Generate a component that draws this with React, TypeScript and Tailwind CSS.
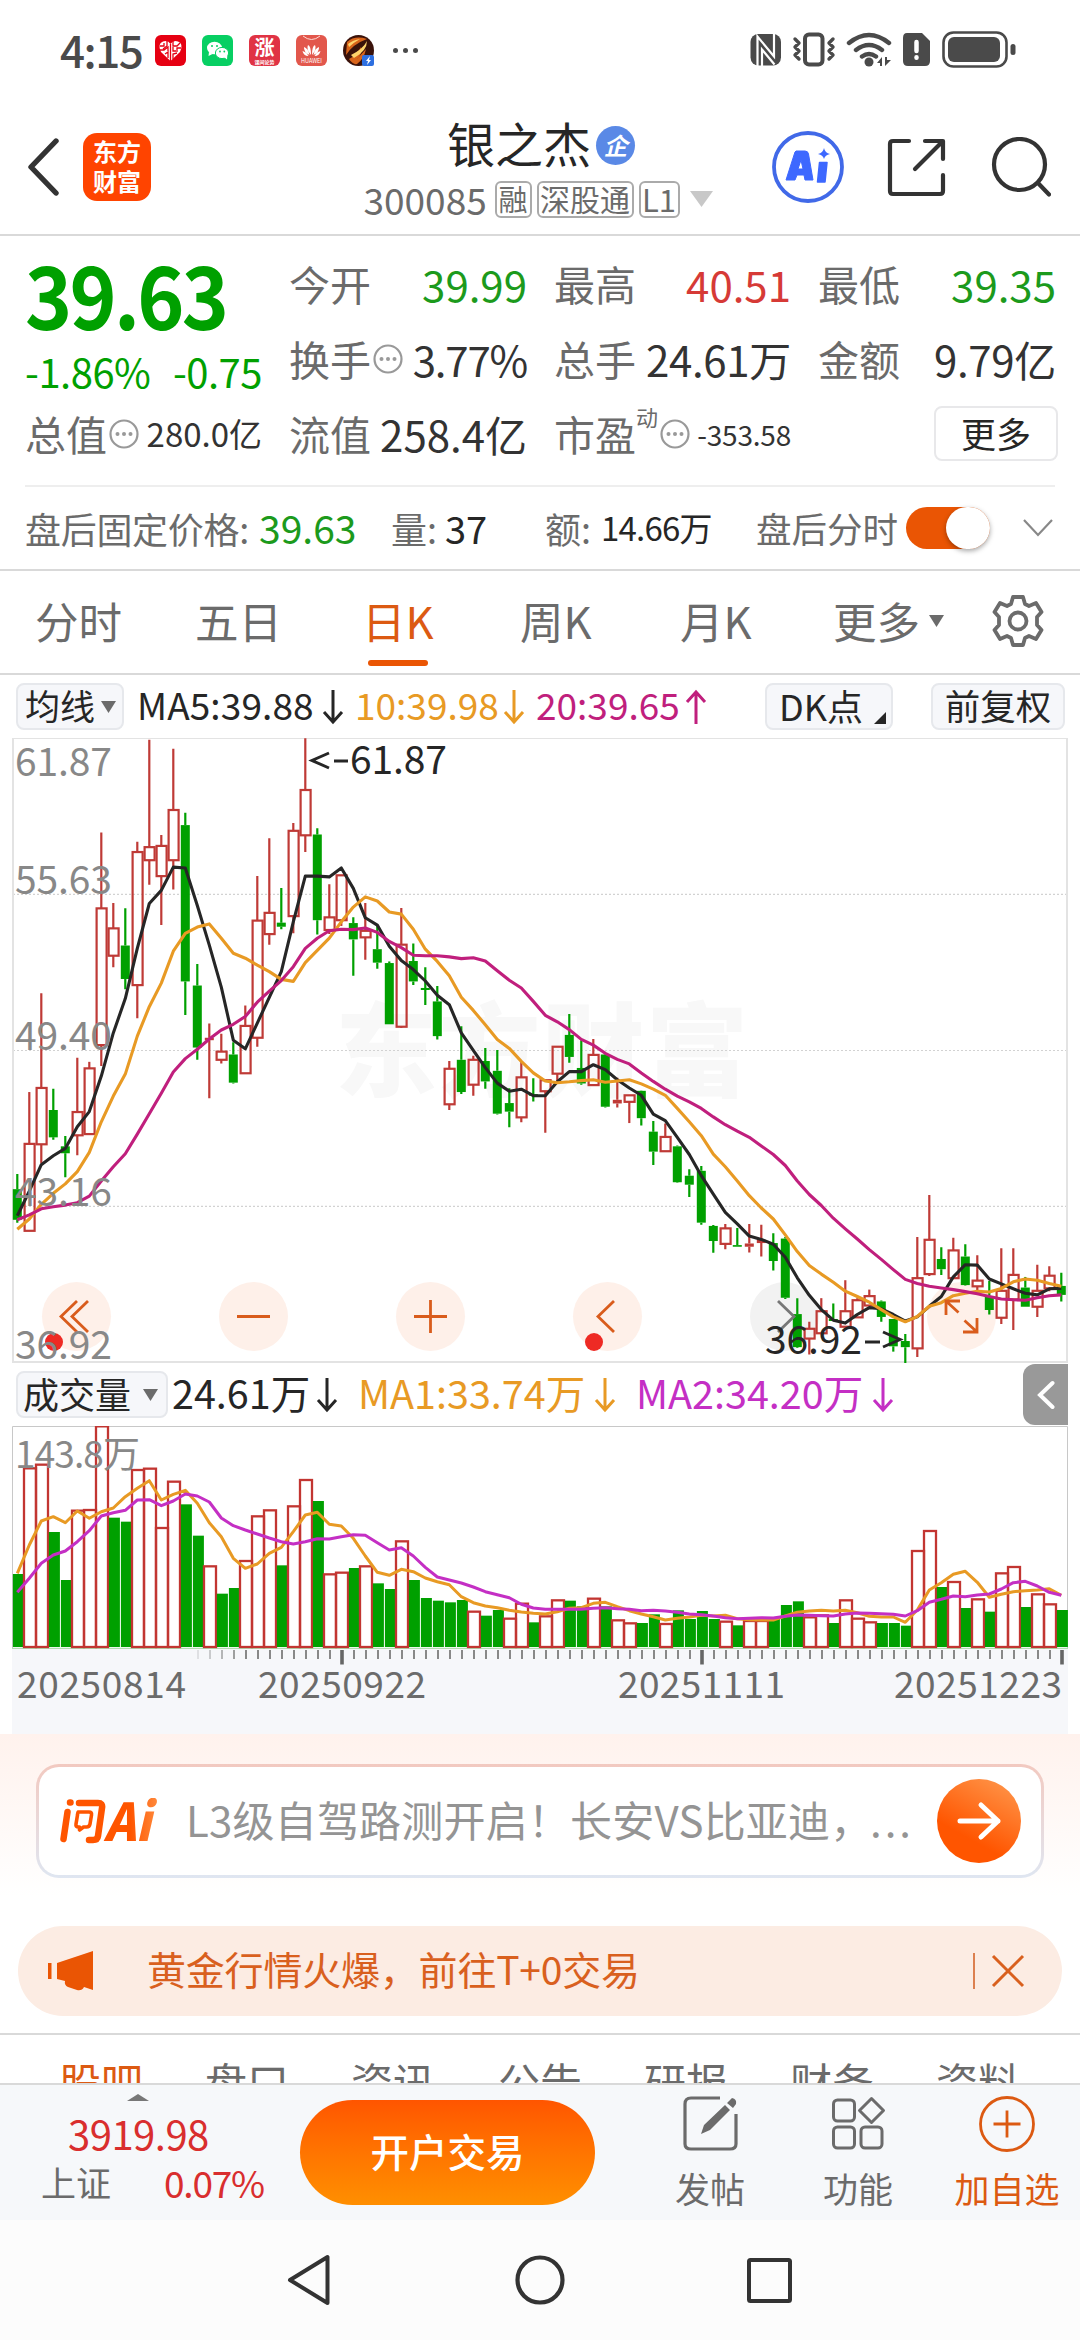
import React from "react";

const GREEN = "#00a000";
const RED = "#c23531";

type Candle = [kind: "r" | "g", high: number, top: number, bottom: number, low: number];

/* Heights are measured in plot units: 2.45 units per pixel, counted down from y = 730. */
const candles: Candle[] = [
  ["g", 1088, 1125, 1200, 1207], ["r", 887, 1014, 1227, 1227], ["r", 645, 877, 1015, 1062], ["g", 879, 931, 998, 1004],
  ["g", 995, 1020, 1037, 1096], ["r", 803, 936, 993, 1042], ["r", 813, 829, 990, 990], ["r", 251, 437, 772, 823],
  ["r", 424, 486, 553, 581], ["g", 437, 528, 610, 635], ["r", 274, 299, 625, 706], ["r", 24, 287, 319, 379],
  ["r", 257, 284, 358, 478], ["r", 46, 196, 319, 391], ["g", 203, 233, 616, 698], ["g", 573, 626, 778, 808],
  ["r", 719, 754, 760, 902], ["r", 744, 788, 808, 817], ["g", 765, 795, 864, 866], ["r", 675, 725, 841, 841],
  ["r", 358, 467, 754, 776], ["r", 265, 448, 500, 526], ["g", 387, 472, 482, 488], ["r", 228, 247, 456, 498],
  ["r", 20, 147, 258, 299], ["g", 241, 256, 466, 501], ["r", 378, 459, 490, 500], ["r", 356, 356, 466, 480],
  ["g", 459, 473, 513, 602], ["r", 424, 492, 508, 563], ["g", 480, 537, 570, 585], ["g", 567, 571, 721, 721],
  ["r", 436, 526, 727, 730], ["g", 523, 566, 616, 625], ["g", 581, 632, 637, 674], ["g", 627, 665, 750, 758],
  ["r", 811, 830, 917, 931], ["g", 726, 808, 887, 892], ["r", 798, 808, 869, 896], ["g", 779, 811, 861, 879],
  ["g", 784, 835, 940, 942], ["g", 878, 914, 935, 973], ["r", 813, 851, 949, 961], ["g", 853, 892, 896, 910],
  ["r", 856, 858, 885, 987], ["r", 774, 776, 842, 860], ["g", 696, 747, 801, 815], ["g", 760, 828, 866, 869],
  ["r", 757, 796, 870, 870], ["g", 793, 795, 923, 925], ["r", 852, 906, 915, 925], ["r", 895, 895, 911, 963],
  ["g", 883, 884, 951, 969], ["g", 958, 984, 1033, 1066], ["r", 964, 997, 1032, 1034], ["g", 1018, 1020, 1108, 1109],
  ["g", 1076, 1092, 1114, 1144], ["g", 1068, 1080, 1207, 1212], ["g", 1213, 1215, 1252, 1281], ["r", 1210, 1221, 1259, 1272],
  ["g", 1220, 1262, 1266, 1266], ["r", 1210, 1258, 1266, 1280], ["r", 1212, 1249, 1257, 1290], ["g", 1233, 1257, 1301, 1324],
  ["g", 1242, 1246, 1391, 1394], ["g", 1392, 1431, 1512, 1514], ["r", 1450, 1467, 1491, 1530], ["r", 1392, 1424, 1478, 1478],
  ["g", 1405, 1443, 1448, 1448], ["r", 1348, 1424, 1462, 1462], ["r", 1392, 1397, 1439, 1439], ["r", 1371, 1387, 1410, 1410],
  ["g", 1398, 1400, 1438, 1450], ["g", 1443, 1443, 1510, 1523], ["g", 1480, 1497, 1512, 1551], ["r", 1242, 1343, 1515, 1536],
  ["r", 1139, 1249, 1333, 1338], ["g", 1267, 1296, 1321, 1335], ["r", 1244, 1275, 1343, 1343], ["g", 1260, 1290, 1360, 1361],
  ["r", 1287, 1349, 1363, 1375], ["g", 1350, 1388, 1421, 1432], ["r", 1270, 1374, 1440, 1455], ["r", 1270, 1335, 1395, 1470],
  ["g", 1340, 1366, 1413, 1413], ["r", 1310, 1374, 1413, 1438], ["r", 1314, 1337, 1368, 1375], ["g", 1330, 1362, 1384, 1400],
];

const ma5 = [1190, 1130, 1065, 1043, 1025, 972, 935, 848, 742, 658, 535, 425, 393, 336, 338, 430, 527, 630, 760, 781, 718, 655, 592, 470, 358, 358, 360, 338, 388, 460, 478, 530, 565, 587, 615, 650, 673, 742, 785, 827, 865, 885, 880, 896, 896, 862, 837, 837, 820, 832, 857, 877, 895, 941, 957, 998, 1040, 1092, 1137, 1182, 1210, 1240, 1248, 1260, 1292, 1342, 1385, 1420, 1446, 1453, 1432, 1415, 1418, 1432, 1448, 1438, 1412, 1388, 1340, 1310, 1311, 1345, 1357, 1369, 1380, 1384, 1369, 1368];
const ma10 = [1223, 1198, 1162, 1135, 1112, 1082, 1035, 960, 897, 843, 750, 678, 620, 542, 498, 483, 475, 510, 547, 559, 576, 592, 611, 616, 570, 540, 510, 470, 434, 409, 419, 446, 451, 488, 537, 567, 602, 655, 687, 722, 758, 780, 812, 840, 860, 864, 862, 859, 857, 863, 860, 857, 867, 880, 895, 927, 960, 994, 1039, 1070, 1105, 1141, 1171, 1198, 1237, 1278, 1312, 1333, 1353, 1375, 1388, 1402, 1420, 1438, 1450, 1437, 1412, 1403, 1386, 1380, 1375, 1377, 1368, 1352, 1345, 1348, 1356, 1363];
const ma20 = [1200, 1188, 1173, 1168, 1164, 1158, 1142, 1105, 1070, 1038, 990, 940, 890, 838, 805, 782, 757, 735, 721, 702, 667, 640, 614, 580, 535, 510, 492, 488, 489, 485, 496, 518, 533, 552, 553, 553, 556, 560, 558, 566, 590, 613, 632, 665, 699, 715, 734, 758, 772, 792, 807, 818, 840, 861, 880, 897, 911, 927, 948, 967, 983, 998, 1019, 1040, 1067, 1105, 1138, 1165, 1196, 1222, 1247, 1273, 1297, 1322, 1346, 1356, 1363, 1367, 1371, 1376, 1381, 1388, 1394, 1396, 1397, 1391, 1386, 1384];

/* Volume tops: 3 units per pixel, counted down from y = 1360; negative marks a rising day. */
const volumes = [642, -322, -311, 516, 660, -449, -447, -196, 473, 485, -327, -323, -501, -362, 433, 527, -616, 701, 684, -600, -466, -448, 616, -436, -357, 423, -640, -635, 624, -616, 670, 687, -541, 660, 714, 722, 727, 720, -752, 767, 750, -773, -728, 787, -766, -718, 722, 739, -713, 739, -778, -787, 789, 763, -789, 751, 777, 753, 777, -782, 796, -780, -780, 775, 735, 724, -769, -763, 789, -718, -773, -784, 789, 789, 797, -570, -510, 681, -663, 744, -715, 755, -637, -618, 741, -700, -730, 750];
const vma1 = [640, 555, 483, 470, 488, 453, 475, 455, 444, 410, 385, 362, 420, 403, 391, 430, 488, 530, 595, 625, 612, 580, 562, 515, 465, 457, 493, 498, 535, 588, 637, 646, 628, 635, 654, 665, 674, 710, 728, 738, 743, 751, 756, 760, 762, 755, 745, 743, 730, 727, 740, 752, 762, 770, 780, 775, 771, 766, 768, 766, 776, 779, 780, 780, 768, 757, 753, 751, 753, 751, 758, 769, 771, 771, 787, 750, 690, 668, 643, 634, 667, 712, 703, 695, 692, 690, 686, 706];
const vma2 = [697, 655, 610, 585, 573, 545, 512, 468, 458, 451, 420, 419, 437, 423, 402, 408, 426, 474, 497, 510, 522, 534, 545, 552, 545, 536, 537, 530, 524, 526, 548, 570, 563, 588, 622, 651, 660, 669, 681, 695, 704, 713, 733, 744, 748, 748, 748, 748, 745, 743, 746, 748, 752, 751, 753, 757, 762, 764, 768, 773, 776, 775, 773, 774, 769, 765, 766, 767, 768, 762, 759, 760, 761, 763, 768, 752, 727, 718, 708, 710, 705, 702, 687, 668, 664, 678, 697, 706];

const cx = (i: number) => 17.3 + 12 * i;
const py = (v: number) => 730 + v / 2.45;
const vy = (v: number) => 1360 + v / 3;
const line = (vals: number[], f: (v: number) => number) =>
  vals.map((v, i) => `${cx(i).toFixed(1)},${f(v).toFixed(1)}`).join(" ");

function StatusBar() {
  return (
    <div className="flex h-[100px] items-center pl-[60px] pr-[64px] text-[#4a4a4a]">
      <span className="w-[95px] whitespace-nowrap pb-[2px] text-[44px] font-medium leading-[56px] tracking-[-1.500px]">4:15</span>
      <div className="flex gap-4">
        <svg width="31" height="31" viewBox="0 0 31 31">
          <rect width="31" height="31" rx="6" fill="#e60012" />
          <path d="M15.500 26L6 17Q2 9 8 6.500Q13 5 15.500 9Q18 5 23 6.500Q29 9 25 17Z" fill="#fff" />
          <path d="M5 11h4v-3M12 6v5l-4 3M5 15h4l4-3v4M18 6v5h4l3-3M26 13h-4v4M18 12v4h3M10 19l3-2v6M15.500 9v17M18 24v-5l4-1" stroke="#e60012" strokeWidth="1.300" fill="none" />
        </svg>
        <svg width="31" height="31" viewBox="0 0 31 31">
          <rect width="31" height="31" rx="6" fill="#07cf63" />
          <ellipse cx="12.500" cy="13" rx="7.500" ry="6.300" fill="#fff" />
          <path d="M7 17l-.5 4 4-2z" fill="#fff" />
          <ellipse cx="20" cy="18" rx="6.600" ry="5.600" fill="#fff" stroke="#07cf63" />
          <path d="M22 22l3 2.500.3-4z" fill="#fff" />
          <g fill="#07cf63"><circle cx="10" cy="11" r="1" /><circle cx="15" cy="11" r="1" /><circle cx="18" cy="16.500" r=".9" /><circle cx="22.300" cy="16.500" r=".9" /></g>
        </svg>
        <div className="flex h-[31px] w-[31px] flex-col items-center rounded-md bg-[#e03344] text-white">
          <span className="text-[20px] font-bold leading-[23px]">涨</span>
          <span className="text-[5px] font-bold leading-[7px]">课间论势</span>
        </div>
        <svg width="31" height="31" viewBox="0 0 31 31">
          <rect width="31" height="31" rx="6" fill="#e2574c" />
          <path d="M7 1q8.500 7 17 0" fill="none" stroke="#ffd9d3" strokeWidth="1" />
          <path d="M15 20q-5-6-3-10 3 1 3 10zM16 20q5-6 3-10-3 1-3 10zM13.500 20q-6-3-5.500-8 4 1 5.500 8zM17.500 20q6-3 5.500-8-4 1-5.500 8zM12.500 21q-5 0-6-5 4 1 6 5zM18.500 21q5 0 6-5-4 1-6 5z" fill="#fff" />
          <text x="15.500" y="28" fontSize="5.500" fill="#fff" textAnchor="middle">HUAWEI</text>
        </svg>
        <svg width="31" height="31" viewBox="0 0 31 31">
          <circle cx="15.500" cy="15.500" r="15.500" fill="#3a120a" />
          <path d="M4 7q8-7 20-3Q10 9 3 20zM6 24Q14 20 18 12q2 6-4 12l9-10q-2 10-9 15-4 1-8-5z" fill="#d8641a" />
          <path d="M8 20Q20 14 24 6q0 10-13 17zM5 9q5-4 12-5-7 4-11 8z" fill="#ffd36b" />
          <rect x="19" y="20" width="12" height="11" rx="2" fill="#2d6fe0" />
          <path d="M27 21l-4 5h2l-1 4 4-5h-2z" fill="#fff" />
        </svg>
      </div>
      <div className="ml-[19px] flex gap-[5px]">
        <i className="h-[5px] w-[5px] rounded-full bg-[#4a4a4a]" />
        <i className="h-[5px] w-[5px] rounded-full bg-[#4a4a4a]" />
        <i className="h-[5px] w-[5px] rounded-full bg-[#4a4a4a]" />
      </div>
      <svg className="ml-auto" width="266" height="38" viewBox="750 32 266 38" fill="#4a4a4a">
        <rect x="750.500" y="35" width="30.500" height="31.500" rx="8" />
        <path d="M757.500 67V37.500L774 57.500V34.500" fill="none" stroke="#fff" strokeWidth="2.200" />
        <path d="M762 67V50.500L774.500 65.500" fill="none" stroke="#fff" strokeWidth="2.200" />
        <rect x="805" y="35.500" width="17.500" height="30" rx="4" fill="none" stroke="#4a4a4a" strokeWidth="4" />
        <path d="M795 40l4 4-4 4 4 4-4 4 4 4M833 40l-4 4 4 4-4 4 4 4-4 4" fill="none" stroke="#4a4a4a" strokeWidth="3.400" strokeLinecap="round" strokeLinejoin="round" />
        <g fill="none" stroke="#4a4a4a" strokeWidth="4.400" strokeLinecap="round">
          <path d="M849 44q20-16 40 0M856 51q13-10 26 0M862 57.500q7-5 14 0" />
        </g>
        <circle cx="869" cy="63" r="4.500" />
        <path d="M882 58v9h-2v-3h-3zM885 67v-9h2v3h4z" />
        <path d="M907 34h15l8 8v20q0 5-5 5h-17q-5 0-5-5V39q0-5 4-5z" />
        <path d="M916.500 43v9M916.500 58.200v.6" stroke="#fff" strokeWidth="4.500" strokeLinecap="round" />
        <rect x="943.500" y="33.500" width="63" height="34" rx="10" fill="none" stroke="#4a4a4a" strokeWidth="2.600" />
        <rect x="948" y="38" width="52" height="25" rx="6" />
        <rect x="1010.500" y="45" width="5" height="11" rx="2.500" />
      </svg>
    </div>
  );
}

function Header() {
  return (
    <div className="flex h-[136px] items-center border-b-2 border-[#d9d9d9]">
      <svg className="ml-[26px]" width="34" height="58" viewBox="0 0 34 58"><path d="M30 3L5 29l25 26" fill="none" stroke="#333" strokeWidth="5.400" strokeLinecap="round" strokeLinejoin="round" /></svg>
      <div className="ml-[23px] flex h-[68px] w-[68px] flex-col items-center justify-center rounded-[14px] bg-[#ff4400] pb-[2px] font-bold text-white">
        <span className="text-[24px] leading-[30px]">东方</span>
        <span className="text-[24px] leading-[30px]">财富</span>
      </div>
      <div className="flex w-[621px] flex-col items-center pb-[1px]">
        <div className="ml-[169px] flex w-[350px] items-center justify-center pr-[10px]">
          <span className="pb-[7px] text-[48px] leading-[56px] text-[#262626]">银之杰</span>
          <span className="ml-[5px] flex h-[39px] w-[39px] items-center justify-center rounded-full bg-[#5a89e6] pb-[2px] text-[24px] font-bold italic leading-none text-white">企</span>
        </div>
        <div className="ml-[156px] mt-[2px] flex h-[40px] w-[352px] items-center text-[#6b6b6b]">
          <span className="w-[131px] text-[37px] leading-none">300085</span>
          <span className="flex h-[37px] w-[37px] items-center justify-center rounded-md border-2 border-[#aaa] pb-[2px] text-[29px] leading-none">融</span>
          <span className="ml-[5px] flex h-[37px] w-[97px] items-center justify-center rounded-md border-2 border-[#aaa] pb-[2px] text-[30px] leading-none">深股通</span>
          <span className="ml-[5px] flex h-[37px] w-[41px] items-center justify-center rounded-md border-2 border-[#aaa] pb-[2px] text-[31px] leading-none">L1</span>
          <svg className="ml-[10px]" width="23" height="16" viewBox="0 0 23 16"><path d="M0 0h23L11.500 16z" fill="#c8c8c8" /></svg>
        </div>
      </div>
      <svg width="72" height="72" viewBox="772 132 72 72">
        <circle cx="808" cy="168" r="34" fill="none" stroke="#4169e8" strokeWidth="3.800" />
        <path d="M796 152h9q3 0 3.500 3l4.500 26h-8l-1-5h-7l-2 5h-9l8-25q1-4 2-4zM801 161l-3 9h5z" fill="#3d68ff" fillRule="evenodd" stroke="#3d68ff" strokeWidth="1" strokeLinejoin="round" />
        <path d="M819.500 163.500h7.500l-2 19.500h-7.500z" fill="#3d68ff" stroke="#3d68ff" strokeWidth="1.500" strokeLinejoin="round" />
        <path d="M824 149q1 5 6 6-5 1-6 5-1-4-6-5 5-1 6-6z" fill="#3d68ff" />
      </svg>
      <svg className="ml-[42px]" width="60" height="60" viewBox="886 138 60 60" fill="none" stroke="#333" strokeWidth="4.200" strokeLinecap="round" strokeLinejoin="round">
        <path d="M909 142h-16q-3 0-3 3v47q0 3 3 3h47q3 0 3-3v-16M925 142h18v18M942 143l-27 27" />
      </svg>
      <svg className="ml-[45px]" width="60" height="60" viewBox="990 138 60 60" fill="none" stroke="#333" strokeWidth="4.200" strokeLinecap="round">
        <circle cx="1018.500" cy="165.500" r="25.500" /><path d="M1037 184l11 11.500" />
      </svg>
    </div>
  );
}

function Info() {
  return (
    <svg width="30" height="30" viewBox="0 0 30 30" className="shrink-0">
      <circle cx="15" cy="15" r="13.500" fill="none" stroke="#999" strokeWidth="2.200" />
      <g fill="#999"><circle cx="8.500" cy="15" r="2" /><circle cx="15" cy="15" r="2" /><circle cx="21.500" cy="15" r="2" /></g>
    </svg>
  );
}

function Stat({ label, value, className }: { label: string; value: string; className: string }) {
  return (
    <div className="flex items-center justify-between whitespace-nowrap">
      <span className="text-[41px] text-[#6b6b6b]">{label}</span>
      <span className={className}>{value}</span>
    </div>
  );
}

function Quote() {
  return (
    <div className="h-[335px] border-b-2 border-[#d9d9d9] px-[25px] pt-[10px] leading-none">
      <div className="grid grid-cols-[237px_238px_237px_238px] grid-rows-[75px_75px_75px] gap-x-[27px]">
        <div className="row-span-2 flex flex-col text-[#00a000]">
          <span className="mt-[2px] origin-left scale-x-92 text-[87px] font-bold leading-[88px] tracking-[-3px]">39.63</span>
          <div className="mt-[13px] flex justify-between text-[40px] leading-[44px] tracking-[-0.500px]"><span>-1.86%</span><span>-0.75</span></div>
        </div>
        <Stat label="今开" value="39.99" className="text-[42px] text-[#1c9a1c]" />
        <Stat label="最高" value="40.51" className="text-[42px] text-[#d63a36]" />
        <Stat label="最低" value="39.35" className="text-[42px] text-[#1c9a1c]" />
        <div className="flex items-center justify-between whitespace-nowrap">
          <span className="flex items-center gap-[2px] text-[41px] text-[#6b6b6b]">换手<Info /></span>
          <span className="text-[42px] tracking-[-1.200px] text-[#333]">3.77%</span>
        </div>
        <Stat label="总手" value="24.61万" className="text-[42px] tracking-[-0.300px] text-[#333]" />
        <Stat label="金额" value="9.79亿" className="text-[42px] tracking-[-0.300px] text-[#333]" />
        <div className="flex items-center justify-between whitespace-nowrap">
          <span className="flex items-center gap-[2px] text-[41px] text-[#6b6b6b]">总值<Info /></span>
          <span className="text-[33px] text-[#333]">280.0亿</span>
        </div>
        <Stat label="流值" value="258.4亿" className="text-[42px] text-[#333]" />
        <div className="flex items-center justify-between whitespace-nowrap">
          <span className="flex items-center text-[41px] text-[#6b6b6b]">市盈<span className="mb-[36px] text-[22px]">动</span><span className="ml-[2px]"><Info /></span></span>
          <span className="text-[28px] tracking-[-0.200px] text-[#333]">-353.58</span>
        </div>
        <div className="flex items-center justify-end">
          <span className="mr-[-2px] flex h-[55px] w-[124px] items-center justify-center rounded-lg border-2 border-[#e8e8ea] pb-[3px] text-[35px] text-[#262626]">更多</span>
        </div>
      </div>
      <div className="mt-[14px] h-[2px] bg-[#eee]" />
      <div className="flex h-[84px] items-center whitespace-nowrap pb-[3px] text-[36px] text-[#6b6b6b]">
        <span className="w-[234px] tracking-[-0.300px]">盘后固定价格:</span>
        <span className="w-[132px] text-[39px] text-[#1c9a1c]">39.63</span>
        <span className="w-[54px] text-[36px]">量:</span>
        <span className="w-[100px] text-[38px] text-[#262626]">37</span>
        <span className="w-[56px] text-[36px]">额:</span>
        <span className="w-[155px] text-[33px] tracking-[-0.800px] text-[#262626]">14.66万</span>
        <span className="w-[150px] text-[35.500px]">盘后分时</span>
        <span className="flex h-[42px] w-[84px] items-center justify-end rounded-full bg-[#ea5504]">
          <i className="h-[42px] w-[44px] rounded-full bg-white shadow-[0_2px_5px_rgba(0,0,0,0.35)]" />
        </span>
        <svg className="ml-[33px]" width="30" height="18" viewBox="0 0 30 18"><path d="M1 1l14 15L29 1" fill="none" stroke="#888" strokeWidth="2.200" /></svg>
      </div>
    </div>
  );
}

function Tabs() {
  return (
    <div className="flex h-[104px] items-center whitespace-nowrap border-b-2 border-[#d9d9d9] pb-[2px] pl-[35px] text-[43.500px] leading-none text-[#6b6b6b]">
      <span className="w-[160px]">分时</span>
      <span className="w-[167px]">五日</span>
      <span className="relative w-[158px] text-[#dc5a12]">日K<i className="absolute left-[6px] top-[61px] h-[6px] w-[60px] rounded-full bg-[#ea5504]" /></span>
      <span className="w-[160px]">周K</span>
      <span className="w-[153px]">月K</span>
      <span>更多</span>
      <svg className="ml-[9px]" width="15" height="12" viewBox="0 0 15 12"><path d="M0 0h15L7.500 12z" fill="#6b6b6b" /></svg>
      <svg className="ml-[47px]" width="54" height="54" viewBox="-27 -27 54 54" fill="none" stroke="#6b6b6b" strokeWidth="3.800" strokeLinejoin="round">
        <path d="M-5 -24H5L7 -17L11 -15L18 -18L23.500 -9L19 -4V4L23.500 9L18 18L11 15L7 17L5 24H-5L-7 17L-11 15L-18 18L-23.500 9L-19 4V-4L-23.500 -9L-18 -18L-11 -15L-7 -17Z" />
        <circle r="8.500" />
      </svg>
    </div>
  );
}

function Arrow({ up = false, color }: { up?: boolean; color: string }) {
  return (
    <svg width="22" height="36" viewBox="0 0 22 36" fill="none" stroke={color} strokeWidth="3">
      {up ? <path d="M11 35V3M2 13l9-10 9 10" /> : <path d="M11 1v32M2 23l9 10 9-10" />}
    </svg>
  );
}

const Caret = ({ className }: { className: string }) => (
  <svg className={className} width="15" height="12" viewBox="0 0 15 12"><path d="M0 0h15L7.500 12z" fill="#6b6b6b" /></svg>
);

function MaRow() {
  return (
    <div className="flex h-[63px] items-center whitespace-nowrap pl-[16px] text-[37px] leading-none text-[#262626]">
      <span className="flex h-[47px] w-[108px] items-center rounded-lg border-2 border-[#e6e8ec] bg-[#f6f7fa] pl-[7px]"><span className="pb-[4px] text-[35px]">均线</span><Caret className="ml-[6px]" /></span>
      <span className="ml-[13px] w-[185px] pb-[5px] tracking-[0.100px]">MA5:39.88</span>
      <Arrow color="#262626" />
      <span className="ml-[11px] w-[148px] pb-[5px] text-[#e89a24]">10:39.98</span>
      <Arrow color="#e89a24" />
      <span className="ml-[11px] w-[149px] pb-[5px] text-[#c01f7d]">20:39.65</span>
      <Arrow up color="#c01f7d" />
      <span className="relative ml-[58px] flex h-[47px] w-[128px] items-center rounded-lg border-2 border-[#e6e8ec] bg-[#f6f7fa] pb-[4px] pl-[12px] text-[36px]">
        DK点
        <svg className="absolute bottom-[4px] right-[5px]" width="12" height="12" viewBox="0 0 12 12"><path d="M12 0v12H0z" fill="#262626" /></svg>
      </span>
      <span className="ml-[38px] flex h-[47px] w-[134px] items-center justify-center rounded-lg border-2 border-[#e6e8ec] bg-[#f6f7fa] pb-[4px] text-[35.500px]">前复权</span>
    </div>
  );
}

function PriceChart() {
  return (
    <svg className="block" width="1080" height="625" viewBox="0 738 1080 625" fill="none">
      <text x="335" y="1089" fontSize="102" fontWeight="900" fill="#f8f8f8" textLength="413">东方财富</text>
      {[894.300, 1050.500, 1206.300].map((y) => (
        <path key={y} d={`M13 ${y}H1067`} stroke="#d2d2d2" strokeWidth="1.200" strokeDasharray="2 2" />
      ))}
      <rect x="13" y="738" width="1054" height="624" stroke="#e3e3e3" strokeWidth="2" />
      {[76.500, 253.500, 430.500, 607.500, 784.500, 961.500].map((x) => (
        <circle key={x} cx={x} cy="1316.500" r="34.500" fill={x === 784.5 ? "#f2f2f2" : "#fef0e9"} />
      ))}
      {candles.map(([k, h, t, b, l], i) => {
        const x = cx(i);
        const c = k === "r" ? "#bf3a36" : GREEN;
        return (
          <g key={i} stroke={c} strokeWidth="2.200">
            <path d={`M${x} ${py(h)}V${py(t)}M${x} ${py(b)}V${py(l)}`} />
            {k === "g" || b - t < 10 ? (
              <rect x={x - 4.500} y={py(t)} width="9" height={Math.max(1, py(b) - py(t))} fill={c} stroke="none" />
            ) : (
              <rect x={x - 4.700} y={py(t)} width="10" height={py(b) - py(t)} />
            )}
          </g>
        );
      })}
      <g strokeWidth="3.100" strokeLinejoin="round">
        <polyline points={line(ma5, py)} stroke="#262626" />
        <polyline points={line(ma10, py)} stroke="#e89a24" />
        <polyline points={line(ma20, py)} stroke="#c01f7d" />
      </g>
      <g stroke="#d95c1c" strokeWidth="2.800">
        <path d="M77 1301l-16 15.500 16 15.500M88 1301l-16 15.500 16 15.500" />
        <path d="M237 1316.500h33M414 1316.500h33M430.500 1300v33" />
        <path d="M614 1301l-16 15.500 16 15.500" />
        <path d="M778 1301l16 15.500-16 15.500" stroke="#777" />
        <path d="M946 1315v-14h14M946.500 1301.500l12 11M977 1318v14h-14M976.500 1331.500l-12-11" />
      </g>
      <circle cx="54" cy="1342" r="9" fill="#ee2a24" />
      <circle cx="594" cy="1342" r="9" fill="#ee2a24" />
      <g fill="#888" fontSize="39">
        <text x="15" y="776" textLength="97">61.87</text>
        <text x="15" y="894" textLength="97">55.63</text>
        <text x="15" y="1050" textLength="97">49.40</text>
        <text x="15" y="1206" textLength="97">43.16</text>
        <text x="15" y="1358.500" textLength="97">36.92</text>
      </g>
      <g fill="#262626" fontSize="39">
        <text x="350" y="774" textLength="97">61.87</text>
        <text x="765" y="1353.500" textLength="97">36.92</text>
      </g>
      <path d="M329 753l-17 7.500 17 7.500M334 761h14M865 1342h15M883 1332l17 7.500-17 7.500" stroke="#262626" strokeWidth="3" />
    </svg>
  );
}

function VolumeRow() {
  return (
    <div className="flex h-[63px] items-center whitespace-nowrap pl-[16px] text-[39.500px] leading-none text-[#262626]">
      <span className="flex h-[47px] w-[152px] items-center rounded-lg border-2 border-[#e6e8ec] bg-[#f6f7fa] pl-[5px]"><span className="pb-[4px] text-[36px]">成交量</span><Caret className="ml-[12px]" /></span>
      <span className="ml-[4px] w-[144px] pb-[5px]">24.61万</span>
      <Arrow color="#262626" />
      <span className="ml-[20px] w-[236px] pb-[5px] text-[#e89a24]">MA1:33.74万</span>
      <Arrow color="#e89a24" />
      <span className="ml-[20px] w-[236px] pb-[5px] text-[#c42fc4]">MA2:34.20万</span>
      <Arrow color="#c42fc4" />
      <span className="ml-auto mr-[12px] flex h-[61px] w-[45px] items-center justify-center rounded-l-xl bg-[#999]">
        <svg width="18" height="30" viewBox="0 0 18 30"><path d="M15.500 3L3 15l12.500 12" fill="none" stroke="#fff" strokeWidth="4" strokeLinecap="round" /></svg>
      </span>
    </div>
  );
}

function VolumeChart() {
  return (
    <svg className="block" width="1080" height="308" viewBox="0 1426 1080 308" fill="none">
      <rect x="12" y="1649" width="1056" height="85" fill="#f6f7fa" />
      <path d="M12.500 1648V1426.500H1067.500V1648" stroke="#c8c8c8" />
      <path d="M12 1648.300H1068" stroke="#9fd49f" />
      {volumes.map((v, i) => {
        const x = 12.600 + 12 * i;
        const y = vy(Math.abs(v));
        return v > 0 ? (
          <rect key={i} x={x + 0.300} y={y} width="11" height={1647 - y} fill={GREEN} />
        ) : (
          <rect key={i} x={x - 0.600} y={y + 1} width="12" height={1646 - y} stroke={RED} strokeWidth="2.300" />
        );
      })}
      <g strokeWidth="3" strokeLinejoin="round">
        <polyline points={line(vma1, vy)} stroke="#e89a24" />
        <polyline points={line(vma2, vy)} stroke="#c42fc4" />
      </g>
      {volumes.map((_, i) => {
        if (i < 15) return null;
        const long = i === 27 || i === 57 || i === 87;
        return (
          <path key={i} d={`M${18 + 12 * i} 1650V${long ? 1664.500 : 1659}`} stroke={long ? "#666" : "#888"} strokeWidth={long ? 3.600 : 2} opacity={Math.min(1, (i - 14) / 5)} />
        );
      })}
      <text x="15" y="1468" fontSize="37" fill="#888" textLength="125">143.8万</text>
      <g fill="#6b6b6b" fontSize="37">
        <text x="17" y="1698" textLength="169">20250814</text>
        <text x="258" y="1698" textLength="168">20250922</text>
        <text x="618" y="1698" textLength="167">20251111</text>
        <text x="894" y="1698" textLength="168">20251223</text>
      </g>
    </svg>
  );
}

function AskAi() {
  return (
    <div className="h-[192px] bg-gradient-to-b from-[#fff2ed] to-white to-85% px-[36px] pt-[30px]">
      <div className="rounded-[23px] bg-gradient-to-b from-[#f2c9c0] to-[#dfe6f1] p-[3px]">
        <div className="flex h-[108px] items-center whitespace-nowrap rounded-[20px] bg-white pl-[21px]">
          <svg width="100" height="46" viewBox="60 1798 100 46">
            <defs>
              <linearGradient id="ask" x1="0" x2="1"><stop offset=".5" stopColor="#ff5500" /><stop offset="1" stopColor="#ff8a3c" /></linearGradient>
            </defs>
            <g fill="none" stroke="#ff5500" strokeWidth="6.500" strokeLinecap="round" strokeLinejoin="round">
              <path d="M67.500 1812l-4 27M70 1802.500h.5M79 1803h19q5 0 4 5l-4 28q-.5 4-5 4h-4" />
              <path d="M78 1812h11q3 0 2.500 3l-1.500 9q-.5 3-3.500 3h-3l-4 3v-3h-1q-3 0-2.500-3l1.500-9q.2-3 .5-3z" strokeWidth="3.600" />
            </g>
            <text x="104" y="1841" fontSize="52" fontWeight="900" fontStyle="italic" fill="url(#ask)" textLength="47" lengthAdjust="spacingAndGlyphs">Ai</text>
          </svg>
          <span className="ml-[26px] w-[684px] pb-[4px] text-[42px] leading-none tracking-[0.200px] text-[#949494]">L3级自驾路测开启！长安VS比亚迪，</span>
          <span className="w-[50px] pb-[4px] text-[42px] leading-none tracking-[3px] text-[#949494]">...</span>
          <svg className="ml-[16px]" width="86" height="86" viewBox="0 0 86 86">
            <defs><linearGradient id="go" x1=".3" y1=".9" x2=".8" y2="0"><stop offset=".2" stopColor="#ff5500" /><stop offset="1" stopColor="#ff9448" /></linearGradient></defs>
            <circle cx="43" cy="43" r="42" fill="url(#go)" />
            <path d="M24 43h38M45 27l17 16-17 16" fill="none" stroke="#fff" strokeWidth="5" strokeLinecap="round" strokeLinejoin="round" />
          </svg>
        </div>
      </div>
    </div>
  );
}

function Banner() {
  return (
    <div className="mx-[18px] flex h-[90px] items-center rounded-full bg-[#fcece3] pl-[29px] text-[#d9601e]">
      <svg width="48" height="42" viewBox="0 0 48 42" fill="#ea5504">
        <path d="M1 13h3.500v16H1zM10 13L46 1v39l-9-3q-2 4-7 3l-9-3q-4-2-3-6l-8-2z" />
      </svg>
      <span className="ml-[52px] pb-[5px] text-[39px] leading-none tracking-[-0.200px]">黄金行情火爆，前往T+0交易</span>
      <i className="ml-auto h-[36px] w-[2px] bg-[#dc8050]" />
      <svg className="ml-[16px] mr-[37px]" width="34" height="34" viewBox="0 0 34 34"><path d="M2 2l30 30M32 2L2 32" stroke="#d9601e" strokeWidth="3" /></svg>
    </div>
  );
}

function FeedTabs() {
  return (
    <div className="mt-[17px] flex h-[50px] overflow-hidden whitespace-nowrap border-t-2 border-[#d9d9d9] pl-[59px] text-[42px] leading-[60px] text-[#6b6b6b]">
      <div className="mt-[16px] flex">
        <span className="w-[146px] text-[#dc5a12]">股吧</span>
        <span className="w-[146px]">盘口</span>
        <span className="w-[147px]">资讯</span>
        <span className="w-[146px]">公告</span>
        <span className="w-[146px]">研报</span>
        <span className="w-[146px]">财务</span>
        <span>资料</span>
      </div>
    </div>
  );
}

function BottomBar() {
  return (
    <div className="flex h-[137px] border-t-2 border-[#d9d9d9] bg-[#f6f8fa] leading-none">
      <div className="flex w-[300px] flex-col">
        <svg className="ml-[127px] mt-[9px]" width="22" height="7" viewBox="0 0 22 7"><path d="M11 0l11 7H0z" fill="#777" /></svg>
        <span className="ml-[68px] mt-[10px] text-[40px] leading-[44px] tracking-[-0.500px] text-[#d92e2e]">3919.98</span>
        <div className="mt-[5px] flex items-center text-[35px] leading-[44px] text-[#6b6b6b]">
          <span className="ml-[41px] w-[123px]">上证</span>
          <span className="text-[37px] tracking-[-1.200px] text-[#d92e2e]">0.07%</span>
        </div>
      </div>
      <div className="mt-[15px] flex h-[105px] w-[295px] items-center justify-center rounded-full bg-gradient-to-b from-[#ff5500] to-[#ff8f00] pb-[4px] text-[38.500px] font-medium text-white">开户交易</div>
      <div className="ml-[65px] flex w-[100px] flex-col items-center text-[35px] text-[#6b6b6b]">
        <svg className="mt-[10px]" width="58" height="58" viewBox="681 2095 58 58" fill="none" stroke="#6b6b6b" strokeWidth="3.200">
          <path d="M720 2098h-29q-6 0-6 6v40q0 5 6 5h39q6 0 6-5v-30" />
          <path d="M732 2098q5 1 4 6l-3 4-6-5zM725 2105l5 5-20 20-9 4 3-9z" fill="#6b6b6b" stroke="none" />
        </svg>
        <span className="mt-[17px]">发帖</span>
      </div>
      <div className="ml-[48px] flex w-[100px] flex-col items-center text-[35px] text-[#6b6b6b]">
        <svg className="mt-[10px]" width="58" height="58" viewBox="829 2095 58 58" fill="none" stroke="#6b6b6b" strokeWidth="3" strokeLinejoin="round">
          <rect x="833.500" y="2100" width="21" height="21" rx="4" />
          <rect x="833.500" y="2127" width="21" height="21" rx="4" />
          <rect x="861" y="2127" width="21" height="21" rx="4" />
          <path d="M871.500 2098.500l12 12-12 12-12-12z" />
        </svg>
        <span className="mt-[17px]">功能</span>
      </div>
      <div className="ml-[39px] flex w-[120px] flex-col items-center text-[35px] text-[#dc5a12]">
        <svg className="mt-[10px]" width="58" height="58" viewBox="0 0 58 58" fill="none" stroke="#dc5a12" strokeWidth="2.800">
          <circle cx="29" cy="29" r="26.500" /><path d="M15.500 29h27M29 15.500v27" />
        </svg>
        <span className="mt-[17px]">加自选</span>
      </div>
    </div>
  );
}

function NavBar() {
  return (
    <div className="flex h-[120px] items-center bg-[#fcfcfc]">
      <svg className="ml-[285px]" width="48" height="56" viewBox="0 0 48 56" fill="none" stroke="#333" strokeWidth="4" strokeLinejoin="round"><path d="M42.500 5v46L5 28z" /></svg>
      <svg className="ml-[181px]" width="52" height="52" viewBox="0 0 52 52" fill="none" stroke="#333" strokeWidth="4.200"><circle cx="26" cy="26" r="22.500" /></svg>
      <svg className="ml-[178px]" width="50" height="50" viewBox="0 0 50 50" fill="none" stroke="#333" strokeWidth="4"><rect x="5" y="5" width="41" height="41" rx="1.500" /></svg>
    </div>
  );
}

export default function App() {
  return (
    <div className="flex h-[2340px] w-[1080px] flex-col overflow-hidden bg-white font-['Noto_Sans_CJK_SC',sans-serif]">
      <StatusBar />
      <Header />
      <Quote />
      <Tabs />
      <MaRow />
      <PriceChart />
      <VolumeRow />
      <VolumeChart />
      <AskAi />
      <Banner />
      <FeedTabs />
      <BottomBar />
      <NavBar />
    </div>
  );
}
